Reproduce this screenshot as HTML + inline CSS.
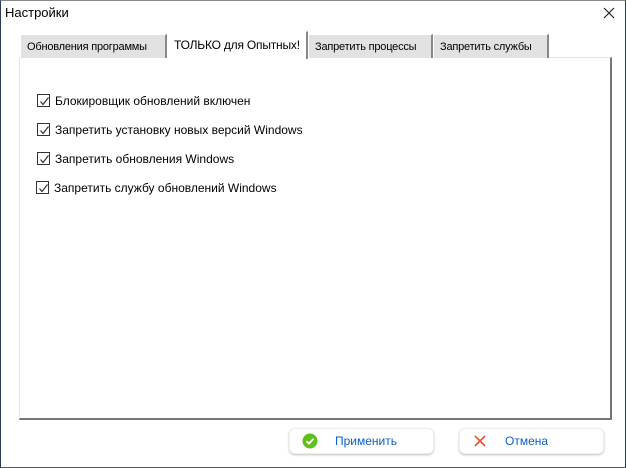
<!DOCTYPE html>
<html><head><meta charset="utf-8"><style>
*{box-sizing:border-box;margin:0;padding:0}
body{width:626px;height:468px;background:#fff;font-family:"Liberation Sans",sans-serif;font-size:12px;color:#000;position:relative;overflow:hidden}
.win{position:absolute;left:0;top:0;width:626px;height:468px;border-left:1px solid #2b3a55;border-right:1px solid #2b3a55;border-bottom:1px solid #555;border-top:1px solid #888}
.t{position:absolute;white-space:nowrap}
.tab{position:absolute;top:34px;height:24px;background:#e1e2e1;border-left:1px solid #fff;border-top:1px solid #fff;border-right:2px solid #888;padding:6px 0 0 6px;font-size:11px;letter-spacing:-0.2px;white-space:nowrap}
.panel{position:absolute;left:19px;top:57px;width:593px;height:363px;border-left:1px solid #e3e3e3;border-top:1px solid #e3e3e3;border-right:2px solid #777;border-bottom:2px solid #777;background:#fff}
.cb{position:absolute;left:37px;width:13px;height:13px;border:1px solid #333;background:#fff}
.cb svg{position:absolute;left:1px;top:1px}
.lbl{position:absolute;left:55px;white-space:nowrap}
.btn{position:absolute;top:428px;width:145px;height:26px;border-radius:6px;background:#fff;box-shadow:0 1px 2px rgba(0,0,0,.25);border:1px solid #eee;color:#0a5fc4;font-size:12px}
</style></head><body>
<div class="win"></div>
<div class="t" style="left:5px;top:5px;font-size:13px">Настройки</div>
<svg style="position:absolute;left:603px;top:7px" width="12" height="12"><path d="M1 1L11 11M11 1L1 11" stroke="#222" stroke-width="1.2"/></svg>
<div class="panel"></div>
<div class="tab" style="left:20px;width:147px">Обновления программы</div>
<div class="tab" style="left:308px;width:125px">Запретить процессы</div>
<div class="tab" style="left:433px;width:116px">Запретить службы</div>
<div class="tab" style="left:167px;top:31px;height:28px;width:141px;background:#fff;padding-top:6px;font-size:12px">ТОЛЬКО для Опытных!</div>
<div class="cb" style="top:94px"><svg width="11" height="11"><path d="M1.5 5.5L4 8.5L9.5 1.5" stroke="#333" stroke-width="1.2" fill="none"/></svg></div>
<div class="lbl" style="top:94px">Блокировщик обновлений включен</div>
<div class="cb" style="top:123px"><svg width="11" height="11"><path d="M1.5 5.5L4 8.5L9.5 1.5" stroke="#333" stroke-width="1.2" fill="none"/></svg></div>
<div class="lbl" style="top:123px">Запретить установку новых версий Windows</div>
<div class="cb" style="top:152px"><svg width="11" height="11"><path d="M1.5 5.5L4 8.5L9.5 1.5" stroke="#333" stroke-width="1.2" fill="none"/></svg></div>
<div class="lbl" style="top:152px">Запретить обновления Windows</div>
<div class="cb" style="top:181px;left:36px"><svg width="11" height="11"><path d="M1.5 5.5L4 8.5L9.5 1.5" stroke="#333" stroke-width="1.2" fill="none"/></svg></div>
<div class="lbl" style="top:181px;left:54px">Запретить службу обновлений Windows</div>
<div class="btn" style="left:289px">
<svg style="position:absolute;left:12px;top:4px" width="16" height="16"><circle cx="8" cy="8" r="7.5" fill="#5fbf1c"/><path d="M4.5 8.3L7 10.6L11.5 5.8" stroke="#fff" stroke-width="1.8" fill="none"/></svg>
<span style="position:absolute;left:45px;top:5px">Применить</span></div>
<div class="btn" style="left:459px">
<svg style="position:absolute;left:14px;top:6px" width="12" height="12"><path d="M1 1L11 11M11 1L1 11" stroke="#e8522e" stroke-width="1.6"/></svg>
<span style="position:absolute;left:45px;top:5px">Отмена</span></div>
</body></html>
